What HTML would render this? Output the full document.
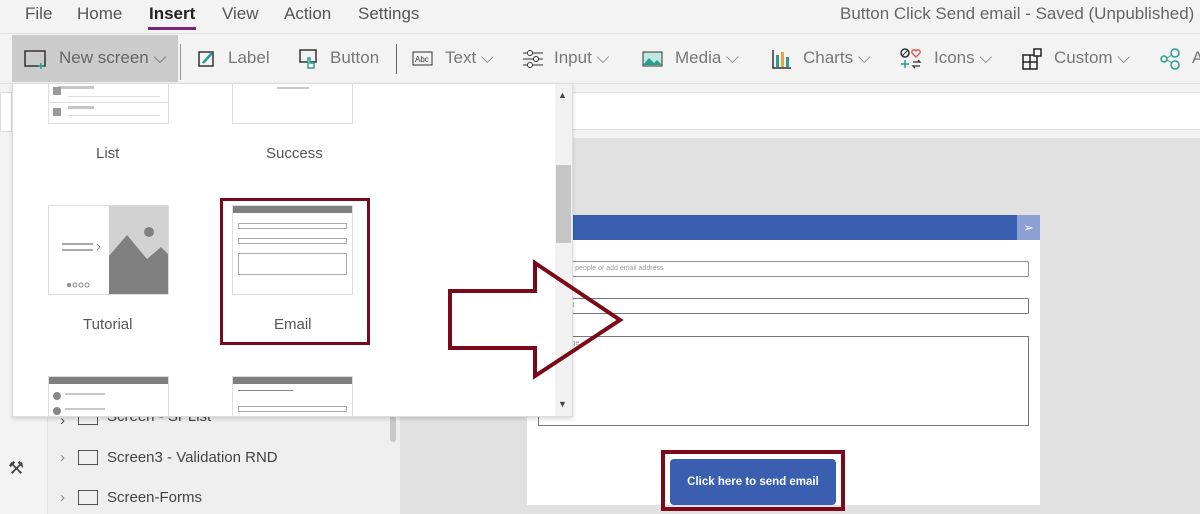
<!DOCTYPE html>
<html><head><meta charset="utf-8"><style>
*{margin:0;padding:0;box-sizing:border-box}
body{width:1200px;height:514px;overflow:hidden;position:relative;background:#f3f3f3;font-family:"Liberation Sans",sans-serif;color:#444}
.a{position:absolute}
.m{position:absolute;top:4px;font-size:17px;color:#555}
.t{position:absolute;top:48px;font-size:17px;color:#777;white-space:nowrap}
.bar{background:#c8c8c8;height:4px;position:absolute}
.ln{background:#ddd;height:2px;position:absolute}
</style></head><body>
<!-- menu -->
<div class="m" style="left:25px">File</div>
<div class="m" style="left:77px">Home</div>
<div class="m" style="left:149px;color:#222;font-weight:bold">Insert</div>
<div class="a" style="left:148px;top:27px;width:48px;height:3px;background:#742774"></div>
<div class="m" style="left:222px">View</div>
<div class="m" style="left:284px">Action</div>
<div class="m" style="left:358px">Settings</div>
<div class="m" style="left:840px;color:#666">Button Click Send email - Saved (Unpublished)</div>
<div class="a" style="left:0;top:33px;width:1200px;height:1px;background:#e2e2e2"></div>
<!-- toolbar -->
<div class="a" style="left:12px;top:35px;width:166px;height:47px;background:#cbcbcb"></div>
<svg class="a" style="left:24px;top:50px" width="24" height="20"><rect x="1" y="1" width="20" height="15" fill="none" stroke="#333" stroke-width="1.5"/><path d="M17 13v6M14 16h6" stroke="#2a9d8f" stroke-width="1.5"/></svg>
<div class="t" style="left:59px;color:#666">New screen ⌵</div>
<div class="a" style="left:180px;top:44px;width:1px;height:36px;background:#999"></div>
<svg class="a" style="left:197px;top:49px" width="20" height="20"><rect x="2" y="3" width="14" height="14" fill="none" stroke="#333" stroke-width="1.5"/><path d="M6 14l9-10" stroke="#2a9d8f" stroke-width="2.5"/></svg>
<div class="t" style="left:228px">Label</div>
<svg class="a" style="left:299px;top:48px" width="22" height="22"><rect x="1" y="2" width="16" height="12" fill="none" stroke="#333" stroke-width="1.5"/><path d="M9 20v-10h2v5h4v5z" fill="#fff" stroke="#2a9d8f" stroke-width="1.5"/></svg>
<div class="t" style="left:330px">Button</div>
<div class="a" style="left:396px;top:44px;width:1px;height:30px;background:#666"></div>
<svg class="a" style="left:412px;top:51px" width="22" height="16"><rect x="1" y="1" width="19" height="13" fill="none" stroke="#333"/><text x="3" y="11" font-size="8" font-family="Liberation Sans" fill="#333">Abc</text></svg>
<div class="t" style="left:445px">Text ⌵</div>
<svg class="a" style="left:522px;top:49px" width="22" height="20"><path d="M1 4h20M1 10h20M1 16h20" stroke="#333"/><circle cx="8" cy="4" r="2.5" fill="#fff" stroke="#333"/><circle cx="14" cy="10" r="2.5" fill="#fff" stroke="#333"/><circle cx="8" cy="16" r="2.5" fill="#fff" stroke="#333"/></svg>
<div class="t" style="left:554px">Input ⌵</div>
<svg class="a" style="left:642px;top:51px" width="22" height="16"><rect x="1" y="1" width="19" height="14" fill="#bfe8e0" stroke="#333"/><path d="M1 14l6-7 5 5 3-3 5 5z" fill="#2a9d8f"/></svg>
<div class="t" style="left:675px">Media ⌵</div>
<svg class="a" style="left:772px;top:49px" width="20" height="20"><path d="M1 1v18h18" stroke="#333" fill="none" stroke-width="1.5"/><rect x="4" y="6" width="3" height="12" fill="#2a9d8f"/><rect x="9" y="3" width="3" height="15" fill="#e2a54a"/><rect x="14" y="8" width="3" height="10" fill="#2a9d8f"/></svg>
<div class="t" style="left:803px">Charts ⌵</div>
<svg class="a" style="left:900px;top:48px" width="24" height="22"><circle cx="5" cy="5" r="4" fill="none" stroke="#333" stroke-width="1.5"/><path d="M2 8l6-6" stroke="#333"/><path d="M16 9l-4-4a2 2 0 0 1 4-2a2 2 0 0 1 4 2z" fill="none" stroke="#e04848" stroke-width="1.3"/><path d="M1 16h8M5 12v8" stroke="#2a9d8f" stroke-width="1.5"/><path d="M13 14h7l-2-2M20 18h-7l2 2" stroke="#333" fill="none" stroke-width="1.3"/></svg>
<div class="t" style="left:934px">Icons ⌵</div>
<svg class="a" style="left:1022px;top:48px" width="22" height="22"><rect x="1" y="7" width="14" height="14" fill="none" stroke="#222" stroke-width="1.5"/><path d="M8 7v14M1 14h14" stroke="#222" stroke-width="1.5"/><rect x="12" y="1" width="7" height="7" fill="#fff" stroke="#222" stroke-width="1.5"/></svg>
<div class="t" style="left:1054px">Custom ⌵</div>
<svg class="a" style="left:1160px;top:48px" width="24" height="22"><circle cx="4" cy="11" r="3" fill="none" stroke="#2a9d8f" stroke-width="1.5"/><circle cx="15" cy="5" r="4" fill="none" stroke="#2a9d8f" stroke-width="1.5"/><circle cx="15" cy="17" r="4" fill="none" stroke="#2a9d8f" stroke-width="1.5"/><path d="M7 10l5-3M7 12l5 3" stroke="#2a9d8f"/></svg>
<div class="t" style="left:1192px">A</div>
<div class="a" style="left:0;top:83px;width:1200px;height:1px;background:#e0e0e0"></div>
<!-- formula area -->
<div class="a" style="left:573px;top:92px;width:627px;height:38px;background:#fff;border-top:1px solid #ddd;border-bottom:1px solid #ddd"></div>
<!-- left rail & tree -->
<div class="a" style="left:0;top:84px;width:48px;height:430px;background:#f3f3f3;border-right:1px solid #e3e3e3"></div>
<div class="a" style="left:0;top:92px;width:12px;height:40px;background:#fff;border:1px solid #ddd"></div>
<div class="a" style="left:48px;top:416px;width:352px;height:98px;background:#efefef"></div>
<div class="a" style="left:390px;top:416px;width:6px;height:26px;background:#c8c8c8;border-radius:3px"></div>
<div class="a" style="left:60px;top:412px;font-size:15px;color:#555">›</div>
<div class="a" style="left:78px;top:410px;width:20px;height:15px;border:1.5px solid #555"></div>
<div class="a" style="left:107px;top:408px;font-size:15px;color:#444">Screen - SPList</div>
<div class="a" style="left:60px;top:449px;font-size:15px;color:#888">›</div>
<div class="a" style="left:78px;top:450px;width:20px;height:15px;border:1.5px solid #555"></div>
<div class="a" style="left:107px;top:449px;font-size:15px;color:#444">Screen3 - Validation RND</div>
<div class="a" style="left:60px;top:489px;font-size:15px;color:#888">›</div>
<div class="a" style="left:78px;top:490px;width:20px;height:15px;border:1.5px solid #555"></div>
<div class="a" style="left:107px;top:489px;font-size:15px;color:#444">Screen-Forms</div>
<div class="a" style="left:8px;top:458px;font-size:18px;color:#444">⚒</div>
<!-- canvas -->
<div class="a" style="left:400px;top:138px;width:800px;height:376px;background:#e1e1e1"></div>
<div class="a" style="left:527px;top:215px;width:513px;height:290px;background:#fff"></div>
<div class="a" style="left:527px;top:215px;width:513px;height:25px;background:#3a5fb0"></div>
<div class="a" style="left:1017px;top:215px;width:23px;height:25px;background:#8da0d4;color:#fff;font-size:13px;text-align:center;line-height:25px">➢</div>
<div class="a" style="left:538px;top:261px;width:491px;height:16px;border:1px solid #8b8bbb;border-radius:2px;font-size:7px;color:#999;padding:3px 0 0 12px">Search people or add email address</div>
<div class="a" style="left:538px;top:298px;width:491px;height:16px;border:1px solid #777;border-radius:2px;font-size:7px;color:#999;padding:3px 0 0 12px">Subject</div>
<div class="a" style="left:538px;top:336px;width:491px;height:90px;border:1px solid #777;font-size:7px;color:#999;padding:3px 0 0 12px">Message</div>
<div class="a" style="left:661px;top:450px;width:184px;height:61px;border:4px solid #7a0a1a"></div>
<div class="a" style="left:670px;top:459px;width:166px;height:46px;background:#3a5fb0;border-radius:4px;color:#fff;font-weight:bold;font-size:11.5px;text-align:center;line-height:46px">Click here to send email</div>
<!-- dropdown -->
<div class="a" style="left:12px;top:83px;width:561px;height:334px;background:#fff;border:1px solid #ddd;box-shadow:0 2px 4px rgba(0,0,0,.15)"></div>
<div class="a" style="left:555px;top:84px;width:17px;height:332px;background:#f1f1f1"></div>
<div class="a" style="left:556px;top:165px;width:15px;height:78px;background:#c6c6c6"></div>
<div class="a" style="left:558px;top:90px;font-size:9px;color:#444">▲</div>
<div class="a" style="left:558px;top:399px;font-size:9px;color:#444">▼</div>
<!-- List thumb -->
<div class="a" style="left:48px;top:84px;width:121px;height:40px;border:1px solid #ddd;border-top:none"></div>
<div class="ln" style="left:48px;top:102px;width:121px;height:1px"></div>
<div class="bar" style="left:58px;top:86px;width:36px;height:3px"></div>
<div class="bar" style="left:68px;top:106px;width:26px;height:3px"></div>
<div class="ln" style="left:68px;top:96px;width:92px;height:1px"></div>
<div class="ln" style="left:68px;top:115px;width:92px;height:1px"></div>
<div class="a" style="left:53px;top:87px;width:8px;height:8px;background:#999"></div>
<div class="a" style="left:53px;top:108px;width:8px;height:8px;background:#999"></div>
<div class="a" style="left:232px;top:84px;width:121px;height:40px;border:1px solid #ddd;border-top:none"></div>
<div class="bar" style="left:277px;top:87px;width:32px;height:2px"></div>
<div class="a" style="left:96px;top:145px;font-size:15px;color:#555">List</div>
<div class="a" style="left:266px;top:145px;font-size:15px;color:#555">Success</div>
<!-- Tutorial thumb -->
<div class="a" style="left:48px;top:205px;width:121px;height:90px;border:1px solid #ddd;background:#fff;overflow:hidden">
<svg width="121" height="90"><rect x="60" y="0" width="61" height="90" fill="#d2d2d2"/><path d="M60 90V50l18-21 20 24 14-12 9 9V90z" fill="#808080"/><circle cx="100" cy="26" r="5" fill="#808080"/><path d="M13 38h31M13 44h31" stroke="#aaa" stroke-width="2"/><path d="M48 38l3 3-3 3" stroke="#888" fill="none"/><circle cx="20" cy="79" r="2" fill="#888"/><circle cx="26" cy="79" r="2" fill="none" stroke="#888"/><circle cx="32" cy="79" r="2" fill="none" stroke="#888"/><circle cx="38" cy="79" r="2" fill="none" stroke="#888"/></svg></div>
<div class="a" style="left:83px;top:316px;font-size:15px;color:#555">Tutorial</div>
<!-- Email thumb -->
<div class="a" style="left:232px;top:205px;width:121px;height:90px;border:1px solid #ddd;background:#fff">
<div class="a" style="left:0;top:0;width:119px;height:7px;background:#7f7f7f"></div>
<div class="a" style="left:5px;top:17px;width:109px;height:6px;border:1px solid #aaa"></div>
<div class="a" style="left:5px;top:32px;width:109px;height:6px;border:1px solid #aaa"></div>
<div class="a" style="left:5px;top:47px;width:109px;height:22px;border:1px solid #aaa"></div>
</div>
<div class="a" style="left:220px;top:198px;width:150px;height:147px;border:3px solid #7a0a1a"></div>
<div class="a" style="left:274px;top:316px;font-size:15px;color:#555">Email</div>
<!-- bottom thumbs -->
<div class="a" style="left:48px;top:376px;width:121px;height:40px;border:1px solid #ddd;border-bottom:none">
<div class="a" style="left:0;top:0;width:119px;height:7px;background:#7f7f7f"></div>
<div class="a" style="left:4px;top:15px;width:8px;height:8px;border-radius:50%;background:#888"></div>
<div class="a" style="left:4px;top:30px;width:8px;height:8px;border-radius:50%;background:#888"></div>
<div class="bar" style="left:16px;top:16px;width:40px;height:2px"></div>
<div class="bar" style="left:16px;top:31px;width:40px;height:2px"></div></div>
<div class="a" style="left:232px;top:376px;width:121px;height:40px;border:1px solid #ddd;border-bottom:none">
<div class="a" style="left:0;top:0;width:119px;height:7px;background:#7f7f7f"></div>
<div class="bar" style="left:5px;top:13px;width:55px;height:1px;background:#888"></div>
<div class="a" style="left:5px;top:29px;width:109px;height:6px;border:1px solid #aaa"></div></div>
<!-- arrow -->
<svg class="a" style="left:0;top:0" width="1200" height="514"><path d="M450 291H535V263L620 320L535 376V348H450Z" fill="none" stroke="#7a0a1a" stroke-width="4" stroke-linejoin="miter"/></svg>
</body></html>
